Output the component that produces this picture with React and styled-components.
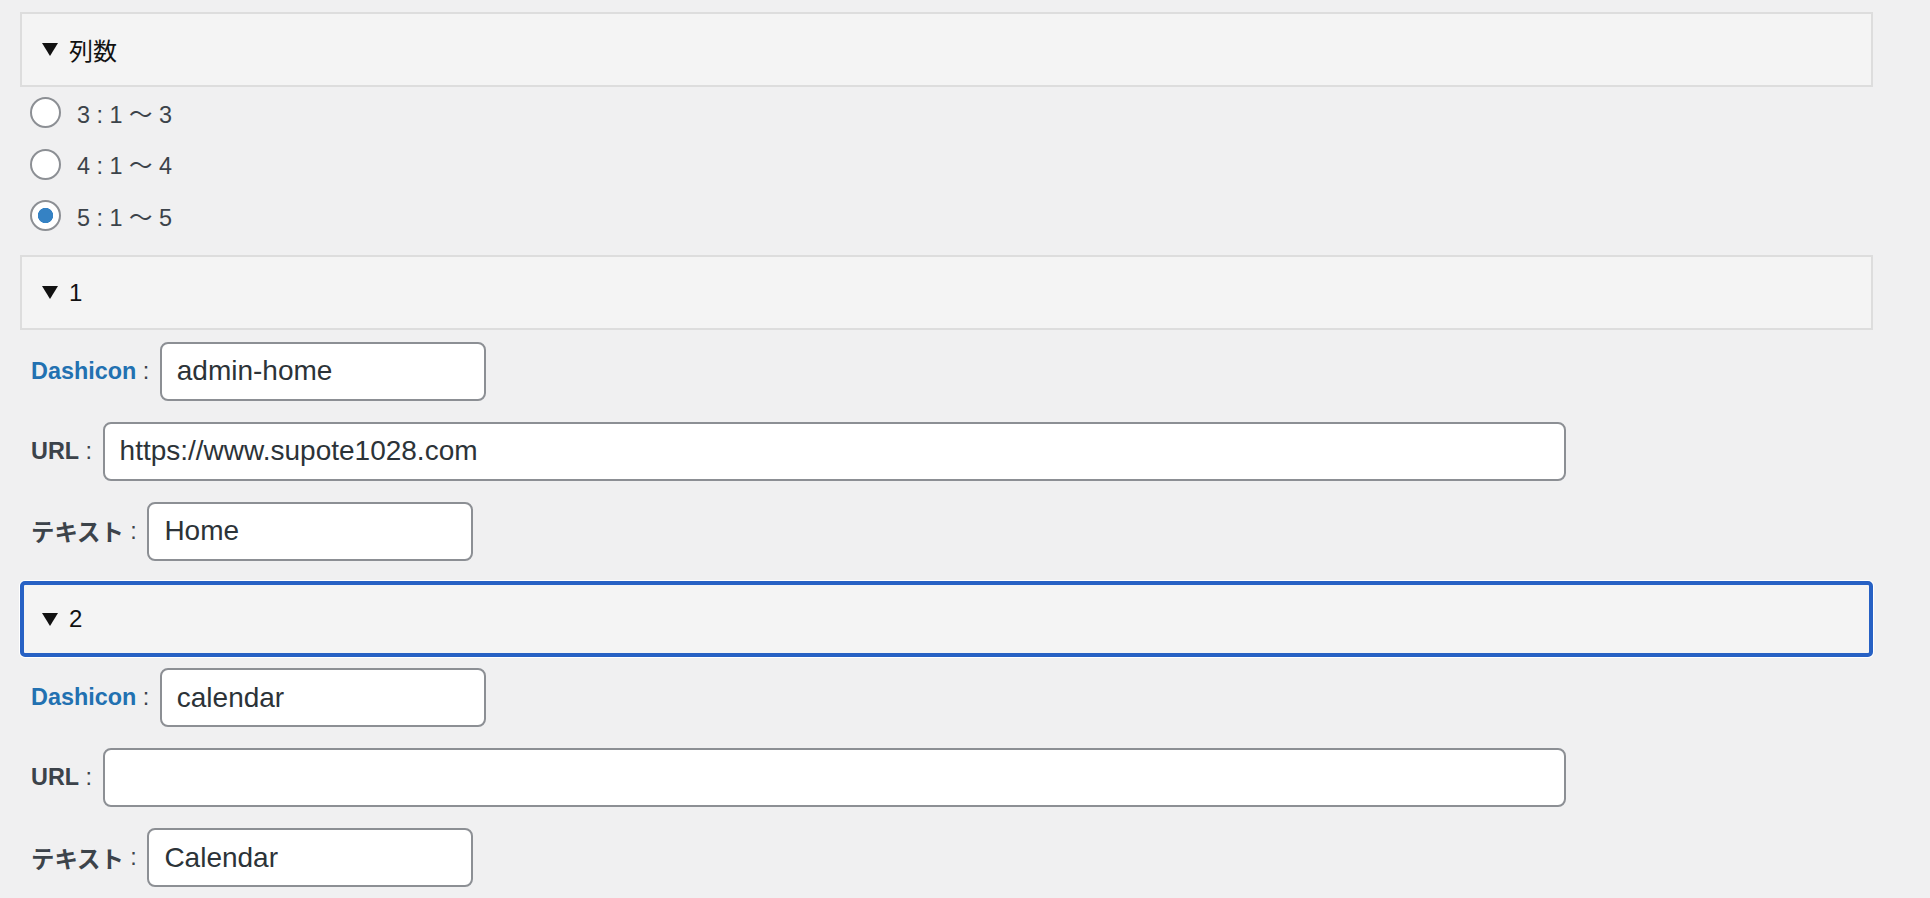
import React from "react";
import styled, { createGlobalStyle } from "styled-components";

const GlobalStyle = createGlobalStyle`
  body {
    margin: 0;
    background: #f0f0f1;
    font-family: "Liberation Sans", "Noto Sans CJK JP", sans-serif;
  }
  * {
    box-sizing: border-box;
  }
`;

const Page = styled.div`
  width: 1853px;
  margin-left: 20px;
  padding-top: 12px;
`;

const Summary = styled.div`
  display: flex;
  align-items: center;
  gap: 11px;
  height: ${({ focused }) => (focused ? "75.5px" : "75px")};
  padding-left: ${({ focused }) => (focused ? "18px" : "20px")};
  background: #f4f4f4;
  border: ${({ focused }) => (focused ? "4px solid #2761c4" : "2px solid #dddddd")};
  border-radius: ${({ focused }) => (focused ? "5px" : "0")};
  box-shadow: ${({ focused }) => (focused ? "0 0 0 1px #ffffff" : "none")};
  font-size: 24px;
  color: #111;
`;

const RadioList = styled.div`
  display: flex;
  flex-direction: column;
  gap: 20.7px;
  padding: 10px 0 24px 10px;
`;

const RadioRow = styled.label`
  display: flex;
  align-items: center;
  gap: 16px;
  height: 31px;
  font-size: 23.4px;
  color: #3c434a;
`;

const Radio = styled.input`
  appearance: none;
  width: 31px;
  height: 31px;
  margin: 0;
  border: 2px solid #8c8f94;
  border-radius: 50%;
  background: #fff;

  &:checked {
    background: radial-gradient(circle, #3582c4 0 7.3px, #fff 8px);
  }
`;

const Fields = styled.div`
  display: flex;
  flex-direction: column;
  gap: 21px;
  padding: 11.5px 0 20.5px 11px;
`;

const FieldRow = styled.div`
  display: flex;
  align-items: center;
  font-size: 23.4px;
  color: #3c434a;
`;

const FieldName = styled.span`
  font-weight: bold;
  color: ${({ link }) => (link ? "#2271b1" : "#3c434a")};
`;

const Sep = styled.span`
  white-space: pre;
`;

const TextInput = styled.input`
  width: ${({ w }) => w}px;
  height: 59px;
  margin: 0 0 0 4px;
  padding: 0 15px;
  border: 2px solid #8c8f94;
  border-radius: 8px;
  background: #fff;
  font-family: "Liberation Sans", sans-serif;
  font-size: 28px;
  color: #2c3338;
  outline: none;
`;

const Marker = () => (
  <svg width="16" height="13" viewBox="0 0 16 13">
    <polygon points="0,0 16,0 8,13" fill="#111" />
  </svg>
);

const columns = [
  { value: 3, label: "3 : 1 〜 3" },
  { value: 4, label: "4 : 1 〜 4" },
  { value: 5, label: "5 : 1 〜 5" },
];

const items = [
  { no: 1, icon: "admin-home", url: "https://www.supote1028.com", text: "Home" },
  { no: 2, icon: "calendar", url: "", text: "Calendar", focused: true },
];

const Item = ({ item }) => (
  <>
    <Summary focused={item.focused}>
      <Marker />
      <span>{item.no}</span>
    </Summary>
    <Fields>
      <FieldRow>
        <FieldName link>Dashicon</FieldName>
        <Sep> : </Sep>
        <TextInput w={326} defaultValue={item.icon} />
      </FieldRow>
      <FieldRow>
        <FieldName>URL</FieldName>
        <Sep> : </Sep>
        <TextInput w={1463} defaultValue={item.url} />
      </FieldRow>
      <FieldRow>
        <FieldName>テキスト</FieldName>
        <Sep> : </Sep>
        <TextInput w={326} defaultValue={item.text} />
      </FieldRow>
    </Fields>
  </>
);

export default function App() {
  return (
    <>
      <GlobalStyle />
      <Page>
        <Summary>
          <Marker />
          <span>列数</span>
        </Summary>
        <RadioList>
          {columns.map((c) => (
            <RadioRow key={c.value}>
              <Radio type="radio" name="cols" defaultChecked={c.value === 5} />
              {c.label}
            </RadioRow>
          ))}
        </RadioList>
        {items.map((item) => (
          <Item key={item.no} item={item} />
        ))}
      </Page>
    </>
  );
}
